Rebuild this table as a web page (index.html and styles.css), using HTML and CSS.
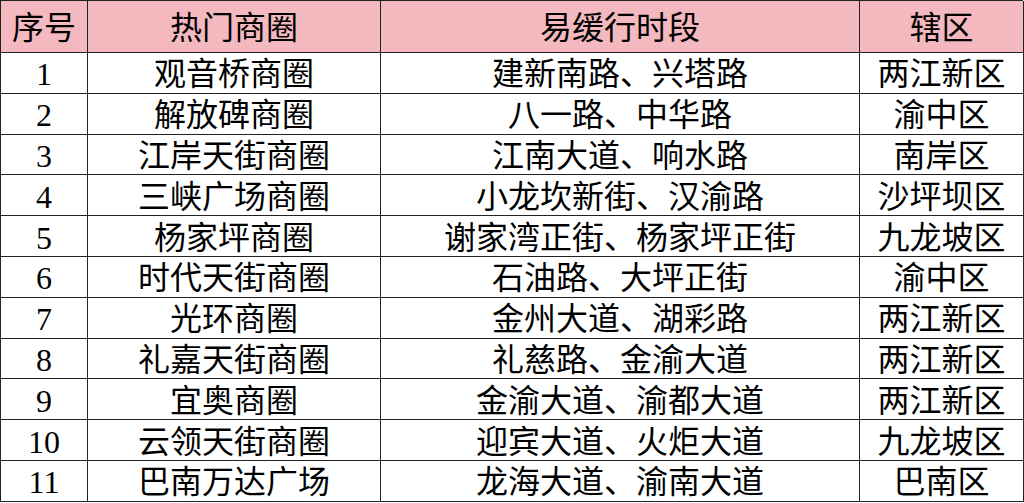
FILE: index.html
```html
<!DOCTYPE html>
<html lang="zh-CN">
<head>
<meta charset="utf-8">
<link rel="stylesheet" href="styles.css">
</head>
<body>
<div class="grid">
  <div class="c h">序号</div><div class="c h">热门商圈</div><div class="c h">易缓行时段</div><div class="c h">辖区</div>
  <div class="c">1</div><div class="c">观音桥商圈</div><div class="c">建新南路、兴塔路</div><div class="c">两江新区</div>
  <div class="c">2</div><div class="c">解放碑商圈</div><div class="c">八一路、中华路</div><div class="c">渝中区</div>
  <div class="c">3</div><div class="c">江岸天街商圈</div><div class="c">江南大道、响水路</div><div class="c">南岸区</div>
  <div class="c">4</div><div class="c">三峡广场商圈</div><div class="c">小龙坎新街、汉渝路</div><div class="c">沙坪坝区</div>
  <div class="c">5</div><div class="c">杨家坪商圈</div><div class="c">谢家湾正街、杨家坪正街</div><div class="c">九龙坡区</div>
  <div class="c">6</div><div class="c">时代天街商圈</div><div class="c">石油路、大坪正街</div><div class="c">渝中区</div>
  <div class="c">7</div><div class="c">光环商圈</div><div class="c">金州大道、湖彩路</div><div class="c">两江新区</div>
  <div class="c">8</div><div class="c">礼嘉天街商圈</div><div class="c">礼慈路、金渝大道</div><div class="c">两江新区</div>
  <div class="c">9</div><div class="c">宜奥商圈</div><div class="c">金渝大道、渝都大道</div><div class="c">两江新区</div>
  <div class="c">10</div><div class="c">云领天街商圈</div><div class="c">迎宾大道、火炬大道</div><div class="c">九龙坡区</div>
  <div class="c">11</div><div class="c">巴南万达广场</div><div class="c">龙海大道、渝南大道</div><div class="c">巴南区</div>
</div>
</body>
</html>
```
FILE: styles.css
```css
html, body {
  margin: 0;
  padding: 0;
  background: #fff;
}
.grid {
  display: grid;
  width: 1023px;
  grid-template-columns: 87px 293px 479px 164px;
  grid-template-rows: 52px repeat(11, 40.8px);
  border-top: 1px solid #222;
  border-left: 1px solid #222;
  box-sizing: border-box;
  font-family: "Liberation Serif", "Noto Sans CJK SC", serif;
  font-size: 32px;
  color: #000;
}
.c {
  display: flex;
  align-items: center;
  justify-content: center;
  padding-top: 3px;
  border-right: 1px solid #222;
  border-bottom: 1px solid #222;
  line-height: 1;
  white-space: nowrap;
  overflow: hidden;
}
.h {
  background: #f4b8bf;
}
```
